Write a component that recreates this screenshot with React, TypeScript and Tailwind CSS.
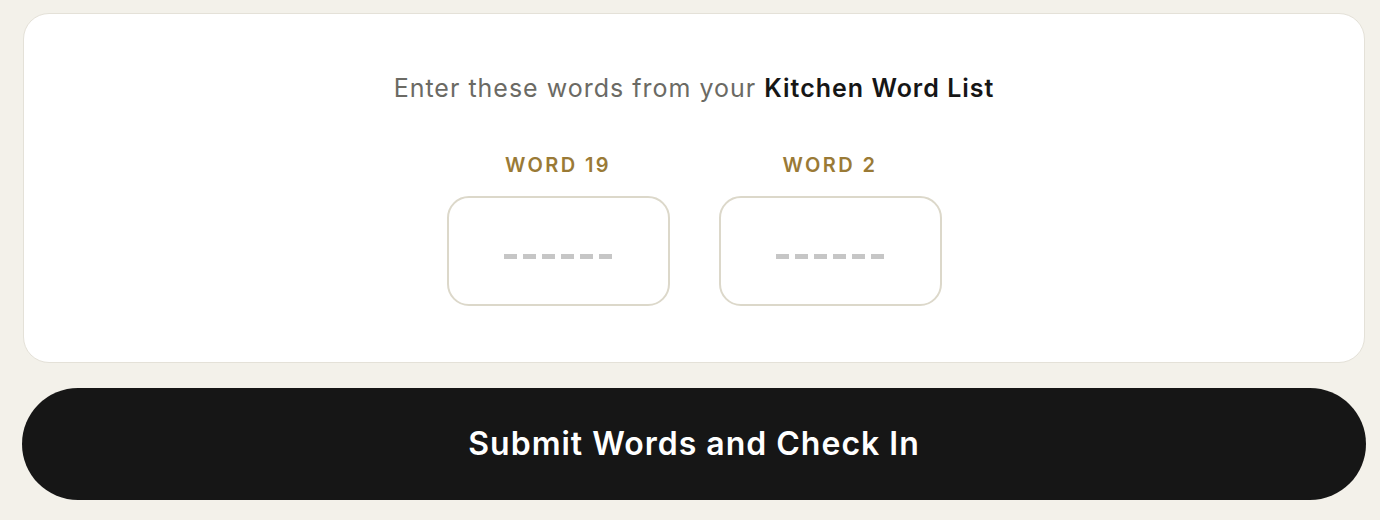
const words = [19, 2];

function Dashes() {
  return (
    <div className="flex items-center gap-[6px]">
      {Array.from({ length: 6 }).map((_, i) => (
        <span key={i} className="block h-[5px] w-[13px] bg-[#c6c6c6]" />
      ))}
    </div>
  );
}

function WordField({ n }: { n: number }) {
  return (
    <div className="flex flex-col items-center">
      <div className="text-[20px] leading-[24px] font-semibold tracking-[0.12em] text-[#9a7a36]">
        WORD {n}
      </div>
      <div className="mt-[19px] flex h-[110px] w-[223px] items-center justify-center rounded-[22px] border-2 border-[#dcd8ca] bg-white pt-[11px]">
        <Dashes />
      </div>
    </div>
  );
}

export default function App() {
  return (
    <div
      className="min-h-[520px] bg-[#f3f1ea] pt-[13px] pl-[22px]"
      style={{ fontFamily: "Inter, 'Noto Sans', sans-serif" }}>
      <div className="w-[1344px]">
        <div className="mx-[1px] flex flex-col items-center rounded-[26px] border border-[#e4e1d8] bg-white pt-[59px] pb-[56px]">
          <p className="text-[25px] leading-[30px] tracking-[1px] text-[#6b6a64]">
            Enter these words from your{" "}
            <span className="font-semibold text-[#161616]">Kitchen Word List</span>
          </p>
          <div className="mt-[50px] flex gap-[49px]">
            {words.map((n) => (
              <WordField key={n} n={n} />
            ))}
          </div>
        </div>
        <button
          type="button"
          className="mt-[25px] flex h-[112px] w-full items-center justify-center rounded-full bg-[#161616] text-[32px] font-semibold tracking-[1px] text-white">
          Submit Words and Check In
        </button>
      </div>
    </div>
  );
}
